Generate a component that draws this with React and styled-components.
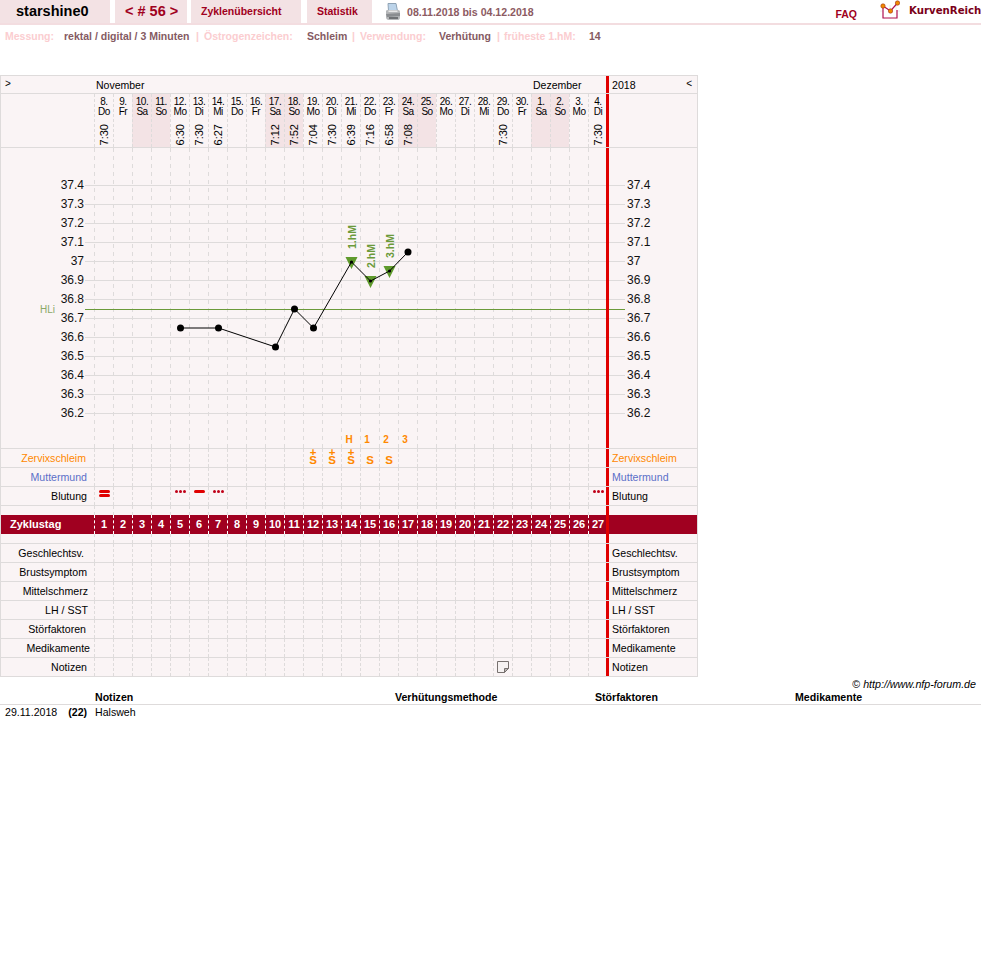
import React from 'react'
import styled, { createGlobalStyle } from 'styled-components'

const GlobalStyle = createGlobalStyle`
  body {
    margin: 0;
    background: #fff;
    color: #000;
    font-family: "Liberation Sans", Arial, sans-serif;
    font-size: 11px;
  }
`

const GRID = '#dedbdb'
const PANEL = '#faf4f5'
const SHADE = '#f3e3e5'
const RED = '#e00000'
const WINE = '#a00020'
const ORANGE = '#ff8800'
const GREEN = '#6b9a3a'

const DAYS = [
  ['8.', 'Do', '7:30'], ['9.', 'Fr'], ['10.', 'Sa'], ['11.', 'So'], ['12.', 'Mo', '6:30'],
  ['13.', 'Di', '7:30'], ['14.', 'Mi', '6:27'], ['15.', 'Do'], ['16.', 'Fr'], ['17.', 'Sa', '7:12'],
  ['18.', 'So', '7:52'], ['19.', 'Mo', '7:04'], ['20.', 'Di', '7:30'], ['21.', 'Mi', '6:39'],
  ['22.', 'Do', '7:16'], ['23.', 'Fr', '6:58'], ['24.', 'Sa', '7:08'], ['25.', 'So'], ['26.', 'Mo'],
  ['27.', 'Di'], ['28.', 'Mi'], ['29.', 'Do', '7:30'], ['30.', 'Fr'], ['1.', 'Sa'], ['2.', 'So'],
  ['3.', 'Mo'], ['4.', 'Di', '7:30'],
]

const TEMPS = ['37.4', '37.3', '37.2', '37.1', '37', '36.9', '36.8', '36.7', '36.6', '36.5', '36.4', '36.3', '36.2']
const CURVE = [[180.5, 328], [218.5, 328], [275.5, 347], [294.5, 309], [313.5, 328], [351.5, 262], [370.5, 281], [389.5, 271], [408, 252]]
const SYMPTOMS = [
  ['Geschlechtsv.', 10], ['Brustsymptom', 7], ['Mittelschmerz', 6], ['LH / SST', 6],
  ['Störfaktoren', 8], ['Medikamente', 4], ['Notizen', 7],
]

const TopBar = styled.header`
  display: flex;
  align-items: stretch;
  height: 23px;
  border-bottom: 2px solid #f3dde0;
`

const Tab = styled.a`
  box-sizing: border-box;
  width: ${p => p.$width}px;
  margin-left: ${p => p.$gap || 0}px;
  padding-left: ${p => p.$pad}px;
  background: #f3e2e4;
  color: ${p => (p.$black ? '#000' : WINE)};
  font-size: ${p => p.$size}px;
  font-weight: bold;
  line-height: 23px;
  white-space: nowrap;
`

const Printer = styled.svg`
  margin: 3px 0 0 13px;
`

const Range = styled.span`
  margin-left: 6px;
  color: #8c5a62;
  font-size: 10.6px;
  font-weight: bold;
  line-height: 24px;
`

const Faq = styled.a`
  margin-left: auto;
  color: ${WINE};
  font-size: 10.5px;
  font-weight: bold;
  line-height: 28px;
`

const Logo = styled.svg`
  margin-left: 23px;
`

const LogoName = styled.span`
  width: 72px;
  margin-left: 9px;
  margin-right: 0;
  color: #7a0018;
  font-family: "DejaVu Sans", sans-serif;
  font-size: 10.2px;
  font-weight: bold;
  line-height: 21px;
  white-space: nowrap;
`

const InfoRow = styled.div`
  display: flex;
  height: 22px;
  padding-left: 5px;
  margin-bottom: 28px;
  font-size: 10.5px;
  font-weight: bold;
  line-height: 22px;
  white-space: nowrap;
`

const InfoLabel = styled.span`
  width: ${p => p.$width}px;
  color: #fbcdd0;
`

const InfoValue = styled.span`
  width: ${p => p.$width}px;
  color: #855a62;
`

const Chart = styled.section`
  box-sizing: border-box;
  width: 698px;
  border: 1px solid ${GRID};
  border-bottom: 0;
  background: ${PANEL};
`

const Row = styled.div`
  display: flex;
  height: ${p => p.$height || 19}px;
  box-sizing: border-box;
  border-bottom: ${p => (p.$bare ? 0 : `1px solid ${GRID}`)};
`

const RowLabel = styled.div`
  box-sizing: border-box;
  flex: 0 0 93px;
  padding-right: ${p => p.$right || 7}px;
  color: ${p => p.$color || '#000'};
  font-size: 10.6px;
  line-height: 18px;
  text-align: right;
  white-space: nowrap;
`

const DayStrip = styled.div`
  display: flex;
  flex: 0 0 512px;
  overflow: hidden;
`

const DayCell = styled.div`
  box-sizing: border-box;
  display: flex;
  flex: 0 0 19px;
  flex-direction: column;
  align-items: center;
  border-left: 1px dashed ${GRID};
`

const TopCell = styled(DayCell)`
  justify-content: flex-start;
  padding-top: ${p => p.$top}px;
`

const SideCell = styled.div`
  box-sizing: border-box;
  display: flex;
  flex: 0 0 91px;
  justify-content: space-between;
  padding: 0 5px 0 3px;
  border-left: 3px solid ${RED};
  color: ${p => p.$color || '#000'};
  font-size: 10.6px;
  line-height: 18px;
  white-space: nowrap;
`

const Arrow = styled.span`
  display: block;
  font-size: 10px;
  line-height: 15px;
`

const HeadCorner = styled.div`
  box-sizing: border-box;
  flex: 0 0 93px;
  padding-left: 4px;
`

const Month = styled.div`
  box-sizing: border-box;
  flex: 0 0 ${p => p.$days * 19}px;
  padding-left: 2px;
  font-size: 10.5px;
  line-height: 19px;
`

const DateCell = styled(DayCell)`
  justify-content: space-between;
  padding: 3px 0 2px;
  background: ${p => (p.$weekend ? SHADE : 'transparent')};
  font-size: 10px;
  line-height: 9.5px;
  letter-spacing: -0.5px;
  text-align: center;
`

const DayName = styled.div`
  white-space: pre-line;
`

const Time = styled.div`
  font-size: 11px;
  letter-spacing: 0;
  line-height: 13px;
  transform: rotate(180deg);
  writing-mode: vertical-rl;
`

const PlotRow = styled.div`
  height: 301px;
  box-sizing: border-box;
  border-bottom: 1px solid ${GRID};
`

const Plot = styled.svg`
  display: block;
  font-family: "Liberation Sans", Arial, sans-serif;
`

const Mucus = styled.span`
  padding-top: ${p => (p.$plus ? 0 : 7.5)}px;
  color: ${ORANGE};
  font-size: 11.5px;
  font-weight: bold;
  line-height: 7.5px;
  text-align: center;
  white-space: pre-line;
`

const BleedBar = styled.i`
  display: block;
  width: 11px;
  height: 3px;
  margin-bottom: 1px;
  border-radius: 2px;
  background: ${RED};
`

const BleedDots = styled.div`
  display: flex;
  gap: 1px;
`

const BleedDot = styled.i`
  width: 3px;
  height: 3px;
  border-radius: 50%;
  background: #c00018;
`

const Band = styled(Row)`
  background: ${WINE};
  color: #fff;
  font-weight: bold;
`

const BandLabel = styled.div`
  flex: 0 0 93px;
  padding-left: 9px;
  box-sizing: border-box;
  font-size: 11px;
  line-height: 19px;
`

const BandCell = styled(DayCell)`
  border-left-color: #fff;
  font-size: 11px;
  line-height: 19px;
`

const Copyright = styled.div`
  height: 13px;
  padding-right: 5px;
  font-size: 10.7px;
  font-style: italic;
  line-height: 15px;
  text-align: right;
`

const CopySign = styled.span`
  font-style: normal;
`

const NotesGrid = styled.div`
  display: grid;
  grid-template-columns: 95px 300px 200px 200px 1fr;
  font-size: 10.6px;
  line-height: 14px;
`

const NotesHead = styled.div`
  height: 14px;
  border-bottom: 1px solid ${GRID};
  font-weight: bold;
`

const NotesCell = styled.div`
  height: 15px;
  line-height: 15px;
`

const NotesDate = styled(NotesCell)`
  display: flex;
  padding-left: 5px;
`

const NotesCycle = styled.b`
  margin-left: 11px;
`

function PrinterIcon() {
  return (
    <Printer width="16" height="18" viewBox="0 0 16 18">
      <path d="M3 0.5 L11 0.5 L12.5 8 L3.5 8 Z" fill="#bcd4ea" stroke="#8fa3b5" />
      <path d="M1 8 Q1 7 3 7 L13 7 Q15 7 15 9 L15 14 Q15 17 13 17 L4 17 Q1 17 1 14 Z" fill="#b4b6b8" />
      <path d="M1 11 L15 10 L15 13 L2 14 Z" fill="#8a8d90" />
      <rect x="4" y="14" width="9" height="2" fill="#6f7275" />
      <rect x="3.5" y="7.5" width="9" height="1.5" fill="#e8e8e8" />
    </Printer>
  )
}

function LogoIcon() {
  return (
    <Logo width="20" height="20" viewBox="0 0 20 20">
      <path d="M0 11 H20 M4 5 V19 M10 5 V19 M16 5 V19" stroke="#eeecec" strokeWidth="1" />
      <path d="M3 8 L3 18 L17 18 L17 10" fill="#fff" stroke="#b01050" strokeWidth="1.2" />
      <path d="M3 6 L10.5 11 L17.5 3" fill="none" stroke="#b01050" strokeWidth="1.2" />
      <circle cx="3" cy="6" r="2.2" fill="#f08a00" stroke="#a03010" strokeWidth="0.6" />
      <circle cx="10.5" cy="11" r="2.2" fill="#f08a00" stroke="#a03010" strokeWidth="0.6" />
      <circle cx="17.5" cy="3" r="2.2" fill="#f08a00" stroke="#a03010" strokeWidth="0.6" />
    </Logo>
  )
}

function NoteIcon() {
  return (
    <svg width="12" height="12" viewBox="0 0 12 12">
      <path d="M0.5 0.5 H11.5 V7.5 L7.5 11.5 H0.5 Z" fill="#f6f2f2" stroke="#77716f" />
      <path d="M7.5 11.5 V7.5 H11.5 Z" fill="#b9b5b4" stroke="#77716f" />
    </svg>
  )
}

function TemperaturePlot() {
  const xs = DAYS.map((_, i) => 94.5 + i * 19)
  return (
    <Plot width="696" height="300" viewBox="1 148 696 300">
      {xs.map(x => (
        <line key={x} x1={x} x2={x} y1="148" y2="448" stroke={GRID} strokeDasharray="4 4" />
      ))}
      {TEMPS.map((t, i) => (
        <g key={t}>
          <line x1="85" x2="625" y1={185.5 + i * 19} y2={185.5 + i * 19} stroke={GRID} />
          <text x="84" y={189 + i * 19} fontSize="12" textAnchor="end" fill="#111">{t}</text>
          <text x="627" y={189 + i * 19} fontSize="12" fill="#111">{t}</text>
        </g>
      ))}
      <line x1="85" x2="625" y1="309.5" y2="309.5" stroke={GREEN} />
      <text x="40" y="313" fontSize="10" fill="#8aa868">HLi</text>
      <rect x="606" y="148" width="3" height="300" fill={RED} />
      <path d="M345.5 257 H357.5 L351.5 269 Z M364.5 276 H376.5 L370.5 288 Z M383.5 266 H395.5 L389.5 278 Z" fill="#5f9a2c" />
      <polyline points={CURVE.map(p => p.join(',')).join(' ')} fill="none" stroke="#000" />
      {CURVE.map(([x, y], i) => (
        <circle key={x} cx={x} cy={y} r={i >= 5 && i < 8 ? 1.6 : 3.5} fill="#000" />
      ))}
      {[['1.hM', 356, 249], ['2.hM', 374.5, 268], ['3.hM', 393.5, 258]].map(([t, x, y]) => (
        <text key={t} x={x} y={y} fontSize="10.5" fontWeight="bold" fill={GREEN} transform={`rotate(-90 ${x} ${y})`}>{t}</text>
      ))}
      {[['H', 349], ['1', 367], ['2', 386], ['3', 405]].map(([t, x]) => (
        <text key={t} x={x} y="443" fontSize="10" fontWeight="bold" fill={ORANGE} textAnchor="middle">{t}</text>
      ))}
    </Plot>
  )
}

function EmptyDays() {
  return <DayStrip>{DAYS.map((_, i) => <DayCell key={i} />)}</DayStrip>
}

function bleedMark(i) {
  if (i === 0) return <><BleedBar /><BleedBar /></>
  if (i === 5) return <BleedBar />
  if (i === 4 || i === 6 || i === 26) {
    return <BleedDots><BleedDot /><BleedDot /><BleedDot /></BleedDots>
  }
  return null
}

export default function App() {
  return (
    <>
      <GlobalStyle />
      <TopBar>
        <Tab $width={110} $pad={16} $size={14.5} $black>starshine0</Tab>
        <Tab $width={72} $gap={5} $pad={10} $size={14.5}>&lt; # 56 &gt;</Tab>
        <Tab $width={110} $gap={4} $pad={10} $size={10.5}>Zyklenübersicht</Tab>
        <Tab $width={65} $gap={6} $pad={10} $size={10.5}>Statistik</Tab>
        <PrinterIcon />
        <Range>08.11.2018 bis 04.12.2018</Range>
        <Faq>FAQ</Faq>
        <LogoIcon />
        <LogoName>KurvenReich</LogoName>
      </TopBar>

      <InfoRow>
        <InfoLabel $width={59}>Messung:</InfoLabel>
        <InfoValue $width={132}>rektal / digital / 3 Minuten</InfoValue>
        <InfoLabel $width={8}>|</InfoLabel>
        <InfoLabel $width={103}>Östrogenzeichen:</InfoLabel>
        <InfoValue $width={45}>Schleim</InfoValue>
        <InfoLabel $width={8}>|</InfoLabel>
        <InfoLabel $width={79}>Verwendung:</InfoLabel>
        <InfoValue $width={58}>Verhütung</InfoValue>
        <InfoLabel $width={7}>|</InfoLabel>
        <InfoLabel $width={85}>früheste 1.hM:</InfoLabel>
        <InfoValue>14</InfoValue>
      </InfoRow>

      <Chart>
        <Row $height={18}>
          <HeadCorner><Arrow>&gt;</Arrow></HeadCorner>
          <DayStrip>
            <Month $days={23}>November</Month>
            <Month $days={4}>Dezember</Month>
          </DayStrip>
          <SideCell>2018<Arrow>&lt;</Arrow></SideCell>
        </Row>

        <Row $height={54}>
          <RowLabel />
          <DayStrip>
            {DAYS.map(([day, name, time]) => (
              <DateCell key={day + name} $weekend={name === 'Sa' || name === 'So'}>
                <DayName>{day}{'\n'}{name}</DayName>
                {time && <Time>{time}</Time>}
              </DateCell>
            ))}
          </DayStrip>
          <SideCell />
        </Row>

        <PlotRow><TemperaturePlot /></PlotRow>

        <Row>
          <RowLabel $color={ORANGE} $right={8}>Zervixschleim</RowLabel>
          <DayStrip>
            {DAYS.map((_, i) => (
              <DayCell key={i}>
                {i >= 11 && i <= 13 && <Mucus $plus>{'+\nS'}</Mucus>}
                {i >= 14 && i <= 15 && <Mucus>S</Mucus>}
              </DayCell>
            ))}
          </DayStrip>
          <SideCell $color={ORANGE}>Zervixschleim</SideCell>
        </Row>
        <Row>
          <RowLabel $color="#5a6fc8">Muttermund</RowLabel>
          <EmptyDays />
          <SideCell $color="#5a6fc8">Muttermund</SideCell>
        </Row>
        <Row>
          <RowLabel>Blutung</RowLabel>
          <DayStrip>
            {DAYS.map((_, i) => <TopCell key={i} $top={3}>{bleedMark(i)}</TopCell>)}
          </DayStrip>
          <SideCell>Blutung</SideCell>
        </Row>
        <Row $height={9} $bare>
          <RowLabel />
          <EmptyDays />
          <SideCell />
        </Row>

        <Band $height={19} $bare>
          <BandLabel>Zyklustag</BandLabel>
          <DayStrip>
            {DAYS.map((_, i) => <BandCell key={i}>{i + 1}</BandCell>)}
          </DayStrip>
          <SideCell />
        </Band>

        <Row $height={10}>
          <RowLabel />
          <EmptyDays />
          <SideCell />
        </Row>
        {SYMPTOMS.map(([name, right]) => (
          <Row key={name}>
            <RowLabel $right={right}>{name}</RowLabel>
            <DayStrip>
              {DAYS.map((_, i) => (
                <TopCell key={i} $top={3}>
                  {name === 'Notizen' && i === 21 && <NoteIcon />}
                </TopCell>
              ))}
            </DayStrip>
            <SideCell>{name}</SideCell>
          </Row>
        ))}
      </Chart>

      <Copyright><CopySign>©</CopySign> http://www.nfp-forum.de</Copyright>

      <NotesGrid>
        <NotesHead />
        <NotesHead>Notizen</NotesHead>
        <NotesHead>Verhütungsmethode</NotesHead>
        <NotesHead>Störfaktoren</NotesHead>
        <NotesHead>Medikamente</NotesHead>
        <NotesDate>29.11.2018<NotesCycle>(22)</NotesCycle></NotesDate>
        <NotesCell>Halsweh</NotesCell>
      </NotesGrid>
    </>
  )
}
